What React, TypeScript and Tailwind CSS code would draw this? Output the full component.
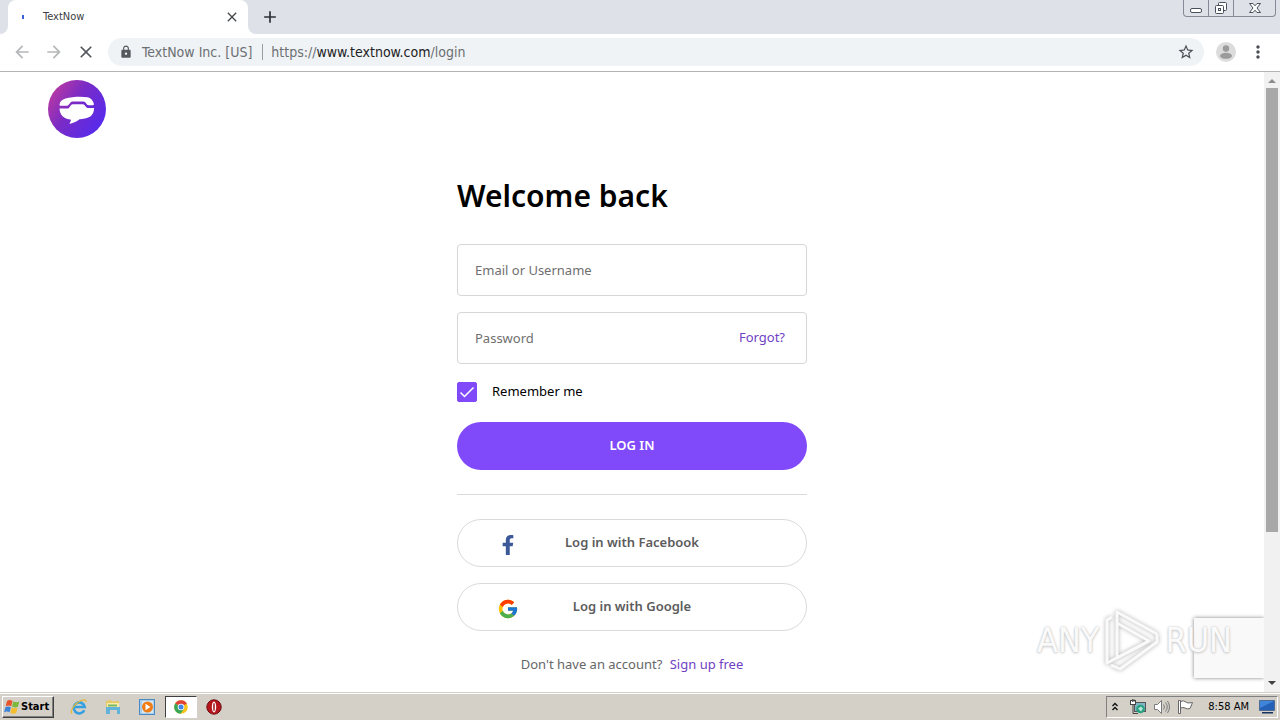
import React from "react";
import { FcGoogle } from "react-icons/fc";
import { FaFacebookF } from "react-icons/fa";
import {
  MdArrowBack,
  MdArrowForward,
  MdClose,
  MdAdd,
  MdLock,
  MdStarBorder,
  MdMoreVert,
} from "react-icons/md";

function TabStrip() {
  return (
    <div className="flex h-[34px] shrink-0 items-start bg-[#dee1e8]">
      <div className="h-full w-2 bg-white">
        <div className="h-full rounded-br-lg bg-[#dee1e8]" />
      </div>
      <div className="flex h-full w-60 items-center rounded-t-lg bg-white pr-2 pl-3">
        <span className="ml-[2px] h-1 w-[2px] bg-[#3b62d8]" />
        <span className="ml-[19px] flex-1 text-[11px] text-[#3c4043]">TextNow</span>
        <button type="button" aria-label="Close tab" className="text-[#45494d]">
          <MdClose size={16} />
        </button>
      </div>
      <div className="h-full w-2 bg-white">
        <div className="h-full rounded-bl-lg bg-[#dee1e8]" />
      </div>
      <button type="button" aria-label="New tab" className="ml-1 flex h-full items-center text-[#2c2f33]">
        <MdAdd size={20} />
      </button>
      <div className="mr-1 ml-auto flex h-[17px] rounded-b-[4px] border border-t-0 border-[#858a97] text-[#4a4f5c]">
        <button type="button" aria-label="Minimize" className="flex w-[25px] items-center justify-center border-r border-[#858a97]">
          <svg width="14" height="14" viewBox="0 0 14 14" fill="#fff" stroke="currentColor">
            <rect x="1.5" y="7.500" width="11" height="4" rx="1.500" />
          </svg>
        </button>
        <button type="button" aria-label="Restore" className="flex w-[25px] items-center justify-center border-r border-[#858a97]">
          <svg width="14" height="14" viewBox="0 0 14 14" fill="#fff" stroke="currentColor">
            <rect x="4.500" y="1.500" width="8" height="8" rx="1" />
            <rect x="1.500" y="4.500" width="8" height="8" rx="1" />
            <rect x="4.500" y="7.500" width="2" height="2" />
          </svg>
        </button>
        <button type="button" aria-label="Close" className="flex w-[41px] items-center justify-center">
          <svg width="12" height="12" viewBox="0 0 12 12" fill="#fff" stroke="currentColor">
            <path d="M.5 1.500h3.500L6 3.800 8 1.500h3.500L8 6l3.500 4.500H8L6 8.200 4 10.500H.5L4 6z" />
          </svg>
        </button>
      </div>
    </div>
  );
}

function Toolbar() {
  return (
    <div className="flex h-[38px] shrink-0 items-center border-b border-[#b4b4b4] bg-white pr-3 pb-px pl-3">
      <div className="flex w-24 gap-3">
        <button type="button" aria-label="Back" className="text-[#b5b7b9]"><MdArrowBack size={20} /></button>
        <button type="button" aria-label="Forward" className="text-[#b5b7b9]"><MdArrowForward size={20} /></button>
        <button type="button" aria-label="Stop" className="text-[#55595e]"><MdClose size={20} /></button>
      </div>
      <div className="flex h-7 flex-1 items-center rounded-full bg-[#f0f3f5] pr-[9px] pl-[11px] text-[14px] text-[#6b6f73]">
        <MdLock size={14} color="#55595e" />
        <span className="ml-[9px] whitespace-nowrap">TextNow Inc. [US]</span>
        <span className="mr-2 ml-[10px] h-4 w-px bg-[#9a9da1]" />
        <span className="flex-1 whitespace-nowrap">
          https://<span className="text-[#202124]">www.textnow.com</span>/login
        </span>
        <button type="button" aria-label="Bookmark" className="text-[#4b4f54]"><MdStarBorder size={18} /></button>
      </div>
      <button type="button" aria-label="Profile" className="ml-3">
        <svg width="20" height="20" viewBox="0 0 20 20">
          <circle cx="10" cy="10" r="10" fill="#dcdcdc" />
          <circle cx="10" cy="6.500" r="3.200" fill="#9b9b9b" />
          <ellipse cx="10" cy="13.800" rx="6" ry="3" fill="#9b9b9b" />
        </svg>
      </button>
      <button type="button" aria-label="Menu" className="ml-3 text-[#4b4f54]"><MdMoreVert size={20} /></button>
    </div>
  );
}

function Logo() {
  return (
    <svg width="58" height="58" viewBox="0 0 58 58" role="img" aria-label="TextNow">
      <defs>
        <linearGradient id="logo" x1="0" y1="0.100" x2="0.900" y2="0.700">
          <stop offset="0" stopColor="#c53b9c" />
          <stop offset="0.500" stopColor="#7a2bc6" />
          <stop offset="1" stopColor="#5a2be8" />
        </linearGradient>
      </defs>
      <circle cx="29" cy="29" r="29" fill="url(#logo)" />
      <path
        fill="#fff"
        d="M11.500 24.800c.3-3.300 2.500-5.200 6-6.200 6.500-1.900 15.500-2.300 22-1.300 3.300.6 5.600 3 6.400 6.700.1.700-.3 1.200-1 1.200h-4.200c-.9 0-1.400-.3-1.900-.9l-1.600-2c-.5-.6-1-.8-1.800-.8H24.500c-.9 0-1.500.3-2 .9l-1.800 2.400c-.5.700-1.100 1-1.900 1h-6.200c-.7 0-1.100-.3-1.100-1z"
      />
      <path
        fill="#fff"
        d="M11.500 28.600h7.300c1.100 0 1.900-.4 2.500-1.200l1.800-2.300c.4-.6 1-.9 1.800-.9h9.900c.7 0 1.200.3 1.600.8l1.700 2c.6.800 1.300 1.100 2.300 1.100h5.700c-.2 6.300-3.300 9.500-9.200 10.500-2 .3-3.700.5-5.300.6-2.700 1.900-5.700 3.600-10.100 4.900l1.600-4.400c-6.500-.5-11.400-4.100-11.600-11.100z"
      />
    </svg>
  );
}

function SocialButton({ icon, label }: { icon: React.ReactNode; label: string }) {
  return (
    <button
      type="button"
      className="grid h-12 w-full grid-cols-[100px_1fr_100px] items-center rounded-full border border-[#dadada] bg-white font-semibold text-[#5c5c5c]"
    >
      <span className="flex justify-center pt-1">{icon}</span>
      <span>{label}</span>
    </button>
  );
}

function LoginForm() {
  return (
    <form className="mx-auto mt-9 w-[350px] text-[13px]" onSubmit={(e) => e.preventDefault()}>
      <h1 className="text-[30px] leading-11 font-semibold text-black">Welcome back</h1>
      <input
        type="text"
        aria-label="Email or Username"
        placeholder="Email or Username"
        className="mt-[26px] block h-[52px] w-full rounded-[4px] border border-[#d6d6d6] px-[17px] outline-none placeholder:text-[#6f6f6f]"
      />
      <div className="mt-4 flex h-[52px] items-center rounded-[4px] border border-[#d6d6d6] pr-[21px]">
        <input
          type="password"
          aria-label="Password"
          placeholder="Password"
          className="h-full min-w-0 flex-1 px-[17px] outline-none placeholder:text-[#6f6f6f]"
        />
        <a href="#forgot" className="text-[#6f3fc4]">Forgot?</a>
      </div>
      <label className="mt-[18px] flex h-5 items-center gap-[15px] text-black">
        <span className="grid size-5">
          <input type="checkbox" defaultChecked className="peer col-start-1 row-start-1 size-5 appearance-none rounded-[2px] border border-[#8049fa] checked:bg-[#8049fa]" />
          <svg className="pointer-events-none invisible col-start-1 row-start-1 size-5 peer-checked:visible" viewBox="0 0 20 20" fill="none" stroke="#fff" strokeWidth="1.500">
            <path d="M3.500 10.500l4 4 9-9" />
          </svg>
        </span>
        Remember me
      </label>
      <button type="submit" className="mt-5 h-12 w-full rounded-full bg-[#8049fa] font-semibold text-white">LOG IN</button>
      <hr className="my-6 border-[#dadada]" />
      <div className="flex flex-col gap-4">
        <SocialButton label="Log in with Facebook" icon={<FaFacebookF size={20} color="#3b5998" />} />
        <SocialButton label="Log in with Google" icon={<FcGoogle size={22} />} />
      </div>
      <p className="mt-6 text-center text-[#666]">
        Don't have an account? <a href="#signup" className="ml-1 text-[#6f3fc4]">Sign up free</a>
      </p>
    </form>
  );
}

function Watermark() {
  return (
    <div className="pointer-events-none absolute right-12 bottom-5 z-10 flex h-16 items-center gap-1 text-[34px] leading-none text-[#fafafa] [text-shadow:0_0_2px_#c4c4c4,0_1px_3px_#ccc]">
      <span>ANY</span>
      <svg width="58" height="64" viewBox="0 0 58 64" fill="none" stroke="#fafafa" strokeWidth="3" strokeLinejoin="round" className="drop-shadow-[0_0_2px_#aaa]">
        <path d="M14 50V4l40 22" />
        <path d="M14 15l32 18-32 17" />
        <path d="M9 9l-5 3v43l42-22" />
        <path d="M8 57l9 4 37-27v-8" />
      </svg>
      <span>RUN</span>
    </div>
  );
}

function Scrollbar() {
  return (
    <div className="flex w-4 shrink-0 flex-col items-center bg-[#f1f1f1]">
      <svg className="h-4 w-4 shrink-0" viewBox="0 0 16 16" fill="#8c8c8c"><path d="M4 11h8L8 7z" /></svg>
      <div className="w-3 flex-[444] bg-[#a8a8a8]" />
      <div className="flex-[143]" />
      <svg className="h-[17px] w-4 shrink-0" viewBox="0 0 16 17" fill="#404040"><path d="M4 6h8l-4 4z" /></svg>
    </div>
  );
}

function Taskbar() {
  return (
    <div className="flex h-7 shrink-0 items-center border-t border-[#d4d0c8] bg-[#d4d0c8] pr-[2px] pl-[2px] text-[11px] text-black shadow-[inset_0_1px_0_#fff]">
      <button type="button" className="mt-px flex h-[22px] w-[52px] items-center gap-px border border-t-white border-r-[#404040] border-b-[#404040] border-l-white pl-px font-bold shadow-[inset_-1px_-1px_0_#808080]">
        <svg width="16" height="16" viewBox="0 0 16 16" className="shrink-0">
          <path d="M3 2q2.700-1.800 5.500 0L7.200 7.300q-2.700-1.600-5.500 0z" fill="#e8532b" />
          <path d="M9.300 2.300q2.700 1.600 6 .2L13.900 7.800q-3 1.400-5.900-.2z" fill="#7bb83c" />
          <path d="M1.400 8.200q2.700-1.600 5.500 0L5.600 13.300q-2.700-1.600-5.500 0z" fill="#3f83d8" />
          <path d="M7.700 8.500q2.700 1.600 5.900.2L12.200 14q-2.900 1.400-5.800-.2z" fill="#f5bd2c" />
        </svg>
        <span>Start</span>
      </button>
      <nav aria-label="Quick launch" className="mt-px ml-2 flex items-center">
        <button type="button" aria-label="Internet Explorer" className="flex h-[22px] w-[34px] items-center justify-center">
          <svg width="18" height="18" viewBox="0 0 18 18" fill="none">
            <path d="M14.300 12.200a5.500 5.500 0 1 1 .4-3.200H5" stroke="#35a0e0" strokeWidth="2.600" />
            <path d="M2 15.500C-.5 13 5 5 11 2.500c3-1.200 5.300-1 5 1.500" stroke="#e5b838" strokeWidth="1.300" />
          </svg>
        </button>
        <button type="button" aria-label="Explorer" className="flex h-[22px] w-[34px] items-center justify-center">
          <svg width="18" height="18" viewBox="0 0 18 18">
            <path d="M2 3l5-1 1 1.500 7-.5v8H2z" fill="#e8c864" />
            <path d="M3 5h12v5H3z" fill="#f8eca8" />
            <path d="M4 6.500h9v2H4z" fill="#78b868" />
            <path d="M2 9h14v7h-3v-4H6v4H2z" fill="#62b3da" />
          </svg>
        </button>
        <button type="button" aria-label="Media Player" className="flex h-[22px] w-[34px] items-center justify-center">
          <svg width="16" height="16" viewBox="0 0 16 16">
            <rect x="0.500" y="0.500" width="15" height="15" fill="#a9cdea" stroke="#4b8abf" />
            <rect x="3" y="2" width="11" height="12" fill="#d5e8f6" />
            <circle cx="8.500" cy="8" r="5.500" fill="#f07c16" />
            <path d="M6.500 4.800v6.400l5-3.200z" fill="#fff" />
          </svg>
        </button>
        <button type="button" aria-label="Chrome" className="ml-px flex h-[22px] w-8 items-center justify-center border border-t-[#404040] border-r-white border-b-white border-l-[#404040] bg-white">
          <svg width="14" height="14" viewBox="0 0 14 14">
            <circle cx="7" cy="7" r="6.800" fill="#f7c51d" />
            <path d="M7 7L1.100 3.600A6.800 6.800 0 0 1 12.900 3.600z" fill="#df4337" />
            <path d="M7 7L1.100 3.600A6.800 6.800 0 0 0 6.500 13.800L10 8.700z" fill="#3aa757" />
            <circle cx="7" cy="7" r="3.300" fill="#fff" />
            <circle cx="7" cy="7" r="2.500" fill="#4285e8" />
          </svg>
        </button>
        <button type="button" aria-label="Opera" className="flex h-[22px] w-[34px] items-center justify-center">
          <svg width="16" height="16" viewBox="0 0 16 16">
            <circle cx="8" cy="8" r="7.200" fill="#b5161b" stroke="#6d0c10" />
            <ellipse cx="8" cy="8" rx="2.200" ry="5.400" fill="#fff" />
            <ellipse cx="8" cy="8" rx="0.800" ry="4.200" fill="#a01418" />
          </svg>
        </button>
      </nav>
      <div className="mt-px ml-auto flex h-[22px] w-[172px] items-center border border-t-[#808080] border-r-white border-b-white border-l-[#808080] pr-[2px] pl-1">
        <svg width="8" height="10" viewBox="0 0 8 10" fill="none" stroke="#111" strokeWidth="1.400">
          <path d="M1.500 4L4 1.500 6.500 4M1.500 8L4 5.500 6.500 8" />
        </svg>
        <svg width="18" height="16" viewBox="0 0 18 16" className="ml-[10px]">
          <rect x="5.500" y="3.500" width="11" height="9" fill="#7fb5c5" stroke="#555" />
          <path d="M4 5v9.500h5" fill="none" stroke="#444" />
          <rect x="1.500" y="1.500" width="5" height="4" fill="#fff" stroke="#444" />
          <path d="M3.500 0v3M5 0v3" stroke="#444" strokeWidth="0.800" />
          <circle cx="11.500" cy="10" r="4.300" fill="#29a080" />
          <path d="M9 9.500l3-2 2 2-2 3z" fill="#b5e5d6" />
        </svg>
        <svg width="18" height="16" viewBox="0 0 18 16" fill="none" stroke="#7a7a7a" className="ml-[6px]">
          <path d="M1.500 5.500h3l4-4v13l-4-4h-3z" fill="#fff" />
          <path d="M10.500 5.500q2 2.500 0 5M12.500 3.500q3.500 4.500 0 9M14.500 2q4 6 0 12" />
        </svg>
        <svg width="17" height="16" viewBox="0 0 17 16" fill="#fff" stroke="#666" className="ml-[6px]">
          <path d="M3.500 2.500q3-1.500 5.500.5 1 1.500 6.500.5l-2.500 6q-3 1-5-.5-2-1-4.500 0z" />
          <path d="M1.500 1.500h2v13h-2z" />
        </svg>
        <time className="ml-auto whitespace-nowrap">8:58 AM</time>
        <svg width="16" height="16" viewBox="0 0 16 16" className="ml-[10px]">
          <path d="M.5 1.500h15v10H.5z" fill="#2661b8" stroke="#4d6b94" />
          <path d="M1 2h14L1 9z" fill="#3f86db" />
          <path d="M3 13h11v1.500H3z" fill="#14325f" />
        </svg>
      </div>
    </div>
  );
}

export default function App() {
  return (
    <div className="flex h-screen flex-col overflow-hidden bg-white font-['DejaVu_Sans_Condensed',sans-serif]">
      <TabStrip />
      <Toolbar />
      <div className="relative flex min-h-0 flex-1">
        <main className="relative min-w-0 flex-1 overflow-hidden font-['Noto_Sans',sans-serif]">
          <header className="flex pt-2 pl-12"><Logo /></header>
          <LoginForm />
          <div className="absolute right-0 bottom-[14px] h-[60px] w-[70px] bg-[#f9f9f9] shadow-[0_0_4px_#808080]" />
        </main>
        <Scrollbar />
        <Watermark />
      </div>
      <Taskbar />
    </div>
  );
}
